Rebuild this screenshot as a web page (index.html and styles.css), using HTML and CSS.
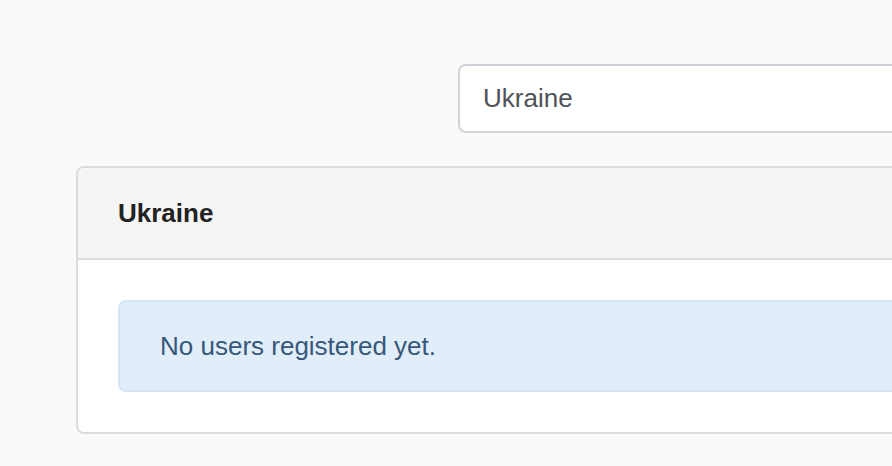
FILE: index.html
```html
<!DOCTYPE html>
<html lang="en">
<head>
<meta charset="utf-8">
<title>Ukraine</title>
<link rel="stylesheet" href="styles.css">
</head>
<body>
<div class="page">
  <div class="search-row">
    <input class="search-input" type="text" value="Ukraine">
  </div>
  <div class="card">
    <div class="card-header">Ukraine</div>
    <div class="card-body">
      <div class="alert">No users registered yet.</div>
    </div>
  </div>
</div>
</body>
</html>
```
FILE: styles.css
```css
html, body {
  margin: 0;
  padding: 0;
  background: #fafafa;
  overflow: hidden;
}
body {
  font-family: "Liberation Sans", Arial, Helvetica, sans-serif;
  font-size: 26px;
  line-height: 30px;
}
.page {
  padding-top: 64px;
  width: 1100px;
}
.search-row {
  padding-left: 458px;
}
.search-input {
  display: block;
  box-sizing: border-box;
  width: 600px;
  height: 69px;
  margin: 0;
  padding: 0 23px;
  border: 2px solid #cfd3d9;
  border-radius: 8px;
  background: #fff;
  color: #4f5257;
  font-family: inherit;
  font-size: 26px;
  line-height: 30px;
  outline: none;
}
.card {
  margin: 33px 0 0 76px;
  width: 950px;
  border: 2px solid #dcdcdc;
  border-radius: 8px;
  background: #fff;
  overflow: hidden;
}
.card-header {
  padding: 30px 40px;
  background: #f5f5f5;
  border-bottom: 2px solid #dcdcdc;
  font-weight: bold;
  color: #222;
}
.card-body {
  padding: 40px;
}
.alert {
  padding: 29px 40px 29px;
  background: #e1edf9;
  border: 2px solid #d4e5f6;
  border-radius: 8px;
  color: #37587a;
}
```
